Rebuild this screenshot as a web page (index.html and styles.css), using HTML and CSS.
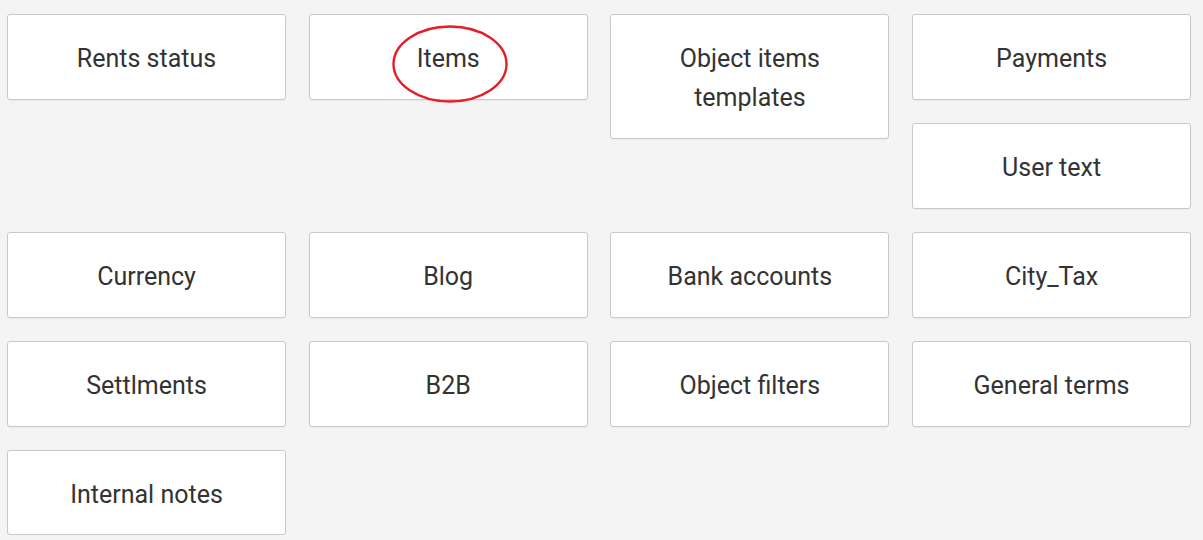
FILE: index.html
```html
<!DOCTYPE html>
<html>
<head>
<meta charset="utf-8">
<link rel="stylesheet" href="styles.css">
</head>
<body>
<div class="page">
  <div class="top">
    <div class="card">Rents status</div>
    <div class="card">Items</div>
    <div class="card">Object items templates</div>
    <div class="stack">
      <div class="card">Payments</div>
      <div class="card">User text</div>
    </div>
  </div>
  <div class="grid">
    <div class="card">Currency</div>
    <div class="card">Blog</div>
    <div class="card">Bank accounts</div>
    <div class="card">City_Tax</div>
    <div class="card">Settlments</div>
    <div class="card">B2B</div>
    <div class="card">Object filters</div>
    <div class="card">General terms</div>
    <div class="card">Internal notes</div>
  </div>
  <svg class="mark" width="120" height="82" viewBox="0 0 120 82"><ellipse cx="60" cy="41" rx="56.5" ry="37.5" fill="none" stroke="#e41d26" stroke-width="2.4"/></svg>
</div>
</body>
</html>
```
FILE: styles.css
```css
html, body {
  margin: 0;
  padding: 0;
  background: #f4f4f4;
}
.page {
  position: relative;
  padding: 14px 0 0 7px;
  font-family: Roboto, "Liberation Sans", sans-serif;
  font-size: 25px;
  color: #333;
}
.top, .grid {
  display: grid;
  grid-template-columns: repeat(4, 279px);
  column-gap: 22.7px;
  row-gap: 23px;
  align-items: start;
}
.top {
  margin-bottom: 23.6px;
}
.stack {
  display: flex;
  flex-direction: column;
  gap: 23.3px;
}
.card {
  box-sizing: border-box;
  background: #fff;
  border: 1px solid #c9c9c9;
  border-radius: 3px;
  padding: 24px 40px 20.7px;
  line-height: 39px;
  min-height: 85.7px;
  text-align: center;
  box-shadow: 0 1px 1px rgba(0,0,0,0.04);
}
.mark {
  position: absolute;
  left: 390px;
  top: 23px;
}
```
